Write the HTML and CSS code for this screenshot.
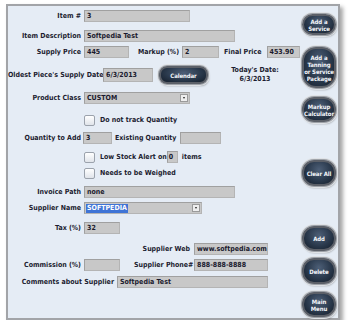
FILE: index.html
```html
<!DOCTYPE html>
<html lang="en">
<head>
  <meta charset="UTF-8" />
  <title>Inventory Item</title>
  <link rel="stylesheet" href="styles.css">
</head>
<body>
  <div class="panel">
    <!-- Form fields -->
    <div class="form">
      <div class="row first">
        <span class="lbl">Item #</span>
        <span class="field w-item">3</span>
      </div>
      <div class="row sp8">
        <span class="lbl">Item Description</span>
        <span class="field w-long">Softpedia Test</span>
      </div>
      <div class="row sp4">
        <span class="lbl">Supply Price</span>
        <span class="field w-supply">445</span>
        <span class="txt markup">Markup (%)</span>
        <span class="field w-markup">2</span>
        <span class="txt final">Final Price</span>
        <span class="field w-final">453.90</span>
      </div>
      <div class="row tall sp8">
        <span class="lbl lbl-oldest">Oldest Piece's Supply Date</span>
        <span class="field w-date">6/3/2013</span>
        <button class="btn btn-calendar">Calendar</button>
        <div class="today">Today's Date:<br>6/3/2013</div>
      </div>
      <div class="row sp8">
        <span class="lbl">Product Class</span>
        <span class="field select w-item">CUSTOM<i class="arrow"></i></span>
      </div>
      <div class="row sp10">
        <span class="check"></span>
        <span class="txt">Do not track Quantity</span>
      </div>
      <div class="row sp6">
        <span class="lbl">Quantity to Add</span>
        <span class="field w-qty">3</span>
        <span class="txt existing">Existing Quantity</span>
        <span class="field w-exist"></span>
      </div>
      <div class="row sp7">
        <span class="check"></span>
        <span class="txt">Low Stock Alert on</span>
        <span class="field w-zero">0</span>
        <span class="txt items">items</span>
      </div>
      <div class="row sp4">
        <span class="check"></span>
        <span class="txt">Needs to be Weighed</span>
      </div>
      <div class="row sp7">
        <span class="lbl">Invoice Path</span>
        <span class="field w-long">none</span>
      </div>
      <div class="row sp4">
        <span class="lbl">Supplier Name</span>
        <span class="field select w-supplier"><b class="hl">SOFTPEDIA</b><i class="arrow"></i></span>
      </div>
      <div class="row sp8">
        <span class="lbl">Tax (%)</span>
        <span class="field w-tax">32</span>
      </div>
      <div class="row sp9">
        <span class="lbl-right web">Supplier Web</span>
        <span class="field w-web">www.softpedia.com</span>
      </div>
      <div class="row sp4">
        <span class="lbl">Commission (%)</span>
        <span class="field w-tax"></span>
        <span class="lbl-right phone">Supplier Phone#</span>
        <span class="field w-web">888-888-8888</span>
      </div>
      <div class="row sp5">
        <span class="lbl lbl-comments">Comments about Supplier</span>
        <span class="field w-long">Softpedia Test</span>
      </div>
    </div>

    <!-- Buttons on the right -->
    <div class="side">
      <button class="btn b-service">Add a<br>Service</button>
      <button class="btn b-package">Add a<br>Tanning<br>or Service<br>Package</button>
      <button class="btn b-markup">Markup<br>Calculator</button>
      <button class="btn b-clear">Clear All</button>
      <button class="btn b-add">Add</button>
      <button class="btn b-delete">Delete</button>
      <button class="btn b-menu">Main<br>Menu</button>
    </div>
  </div>
</body>
</html>
```

FILE: styles.css
```css
/* Page blanche, texte gras et petit comme l'appli d'origine */
body {
  margin: 0;
  background: #ffffff;
  font-family: "DejaVu Sans Condensed", "Liberation Sans", sans-serif;
  font-weight: bold;
  font-size: 7px;
  color: #1c1c30;
}

/* Le cadre bleu clair */
.panel {
  box-sizing: border-box;
  width: 334px;
  height: 316px;
  margin: 4px 0 0 6px;
  border: 2px solid #a2a4a8;
  background: #e5ecf5;
  box-shadow: 3px 3px 4px rgba(0, 0, 0, 0.35);
  display: grid;
  grid-template-columns: 1fr 36px;
  padding-right: 1px;
}

.form {
  display: flex;
  flex-direction: column;
}

/* Une ligne du formulaire */
.row {
  display: flex;
  align-items: center;
  height: 12px;
  white-space: nowrap;
}

.row.tall {
  height: 18px;
}

.first { margin-top: 4px; }
.sp4 { margin-top: 4px; }
.sp5 { margin-top: 5px; }
.sp6 { margin-top: 6px; }
.sp7 { margin-top: 7px; }
.sp8 { margin-top: 8px; }
.sp9 { margin-top: 9px; }
.sp10 { margin-top: 10px; }

/* Libellés alignés à droite */
.lbl {
  width: 73px;
  margin-right: 3px;
  text-align: right;
}

.lbl-oldest {
  width: 92px;
}

.lbl-comments {
  width: 106px;
}

.lbl-right {
  width: 56px;
  margin-right: 4px;
  text-align: right;
}

.lbl-right.web { margin-left: 126px; }
.lbl-right.phone { margin-left: 14px; }

/* Champs gris */
.field {
  box-sizing: border-box;
  height: 12px;
  line-height: 10px;
  padding: 0 2px;
  background: #c8c8c8;
  border: 1px solid #b4b4b4;
  border-top-color: #a0a0a0;
  border-left-color: #a0a0a0;
  color: #1a1a2e;
  overflow: hidden;
}

.w-item { width: 106px; }
.w-long { width: 151px; }
.w-supply { width: 45px; }
.w-markup { width: 37px; }
.w-final { width: 33px; }
.w-date { width: 50px; height: 14px; line-height: 12px; }
.w-qty { width: 29px; margin-left: -1px; }
.w-exist { width: 41px; }
.w-zero { width: 11px; padding: 0 1px; }
.w-supplier { width: 118px; }
.w-tax { width: 36px; }
.w-web { width: 74px; }

.txt.markup { margin-left: 9px; margin-right: 3px; }
.txt.final { margin-left: 5px; margin-right: 5px; }
.txt.existing { margin-left: 3px; margin-right: 4px; }
.txt.items { margin-left: 4px; }

/* Listes déroulantes */
.select {
  position: relative;
}

.arrow {
  position: absolute;
  right: 1px;
  top: 1px;
  width: 8px;
  height: 8px;
  background: #eeeeee;
  border: 1px solid #9a9a9a;
  box-sizing: border-box;
}

.arrow::after {
  content: "";
  position: absolute;
  left: 1.5px;
  top: 2px;
  border-left: 1.5px solid transparent;
  border-right: 1.5px solid transparent;
  border-top: 2px solid #222;
}

.hl {
  display: inline-block;
  background: #3f74d6;
  color: #ffffff;
  padding: 0 1px;
  margin-left: -1px;
  line-height: 9px;
}

/* Cases à cocher */
.check {
  box-sizing: border-box;
  width: 11px;
  height: 11px;
  margin-left: 76px;
  margin-right: 5px;
  border: 1px solid #9ba2ac;
  border-radius: 2px;
  background: linear-gradient(#ffffff, #e0e4ea);
}

/* Boutons ovales foncés */
.btn {
  box-sizing: border-box;
  padding: 0;
  font-family: inherit;
  font-weight: bold;
  font-size: 6px;
  line-height: 7px;
  letter-spacing: -0.1px;
  white-space: nowrap;
  color: #f4f6fa;
  border: 2px solid #5c6068;
  border-radius: 12px;
  background: radial-gradient(ellipse at 50% 35%, #4d5f77 0%, #2a394c 55%, #141d29 100%);
  box-shadow: 0 0 0 1px #9ea2a8, 0 0 0 2px #dfe2e6, 1px 2px 2px rgba(0, 0, 0, 0.35);
  cursor: pointer;
}

.btn-calendar {
  width: 49px;
  height: 18px;
  margin-left: 6px;
  border-radius: 8px;
}

.today {
  width: 86px;
  margin-left: 4px;
  text-align: center;
  line-height: 9px;
}

.side {
  display: flex;
  flex-direction: column;
  align-items: center;
}

.side .btn {
  width: 34px;
}

.b-service { height: 21px; margin-top: 8px; }
.b-package { height: 41px; margin-top: 12px; border-radius: 14px; }
.b-markup { height: 25px; margin-top: 9px; }
.b-clear { height: 26px; margin-top: 38px; }
.b-add { height: 25px; margin-top: 40px; }
.b-delete { height: 26px; margin-top: 7px; }
.b-menu { height: 25px; margin-top: 8px; }
```
